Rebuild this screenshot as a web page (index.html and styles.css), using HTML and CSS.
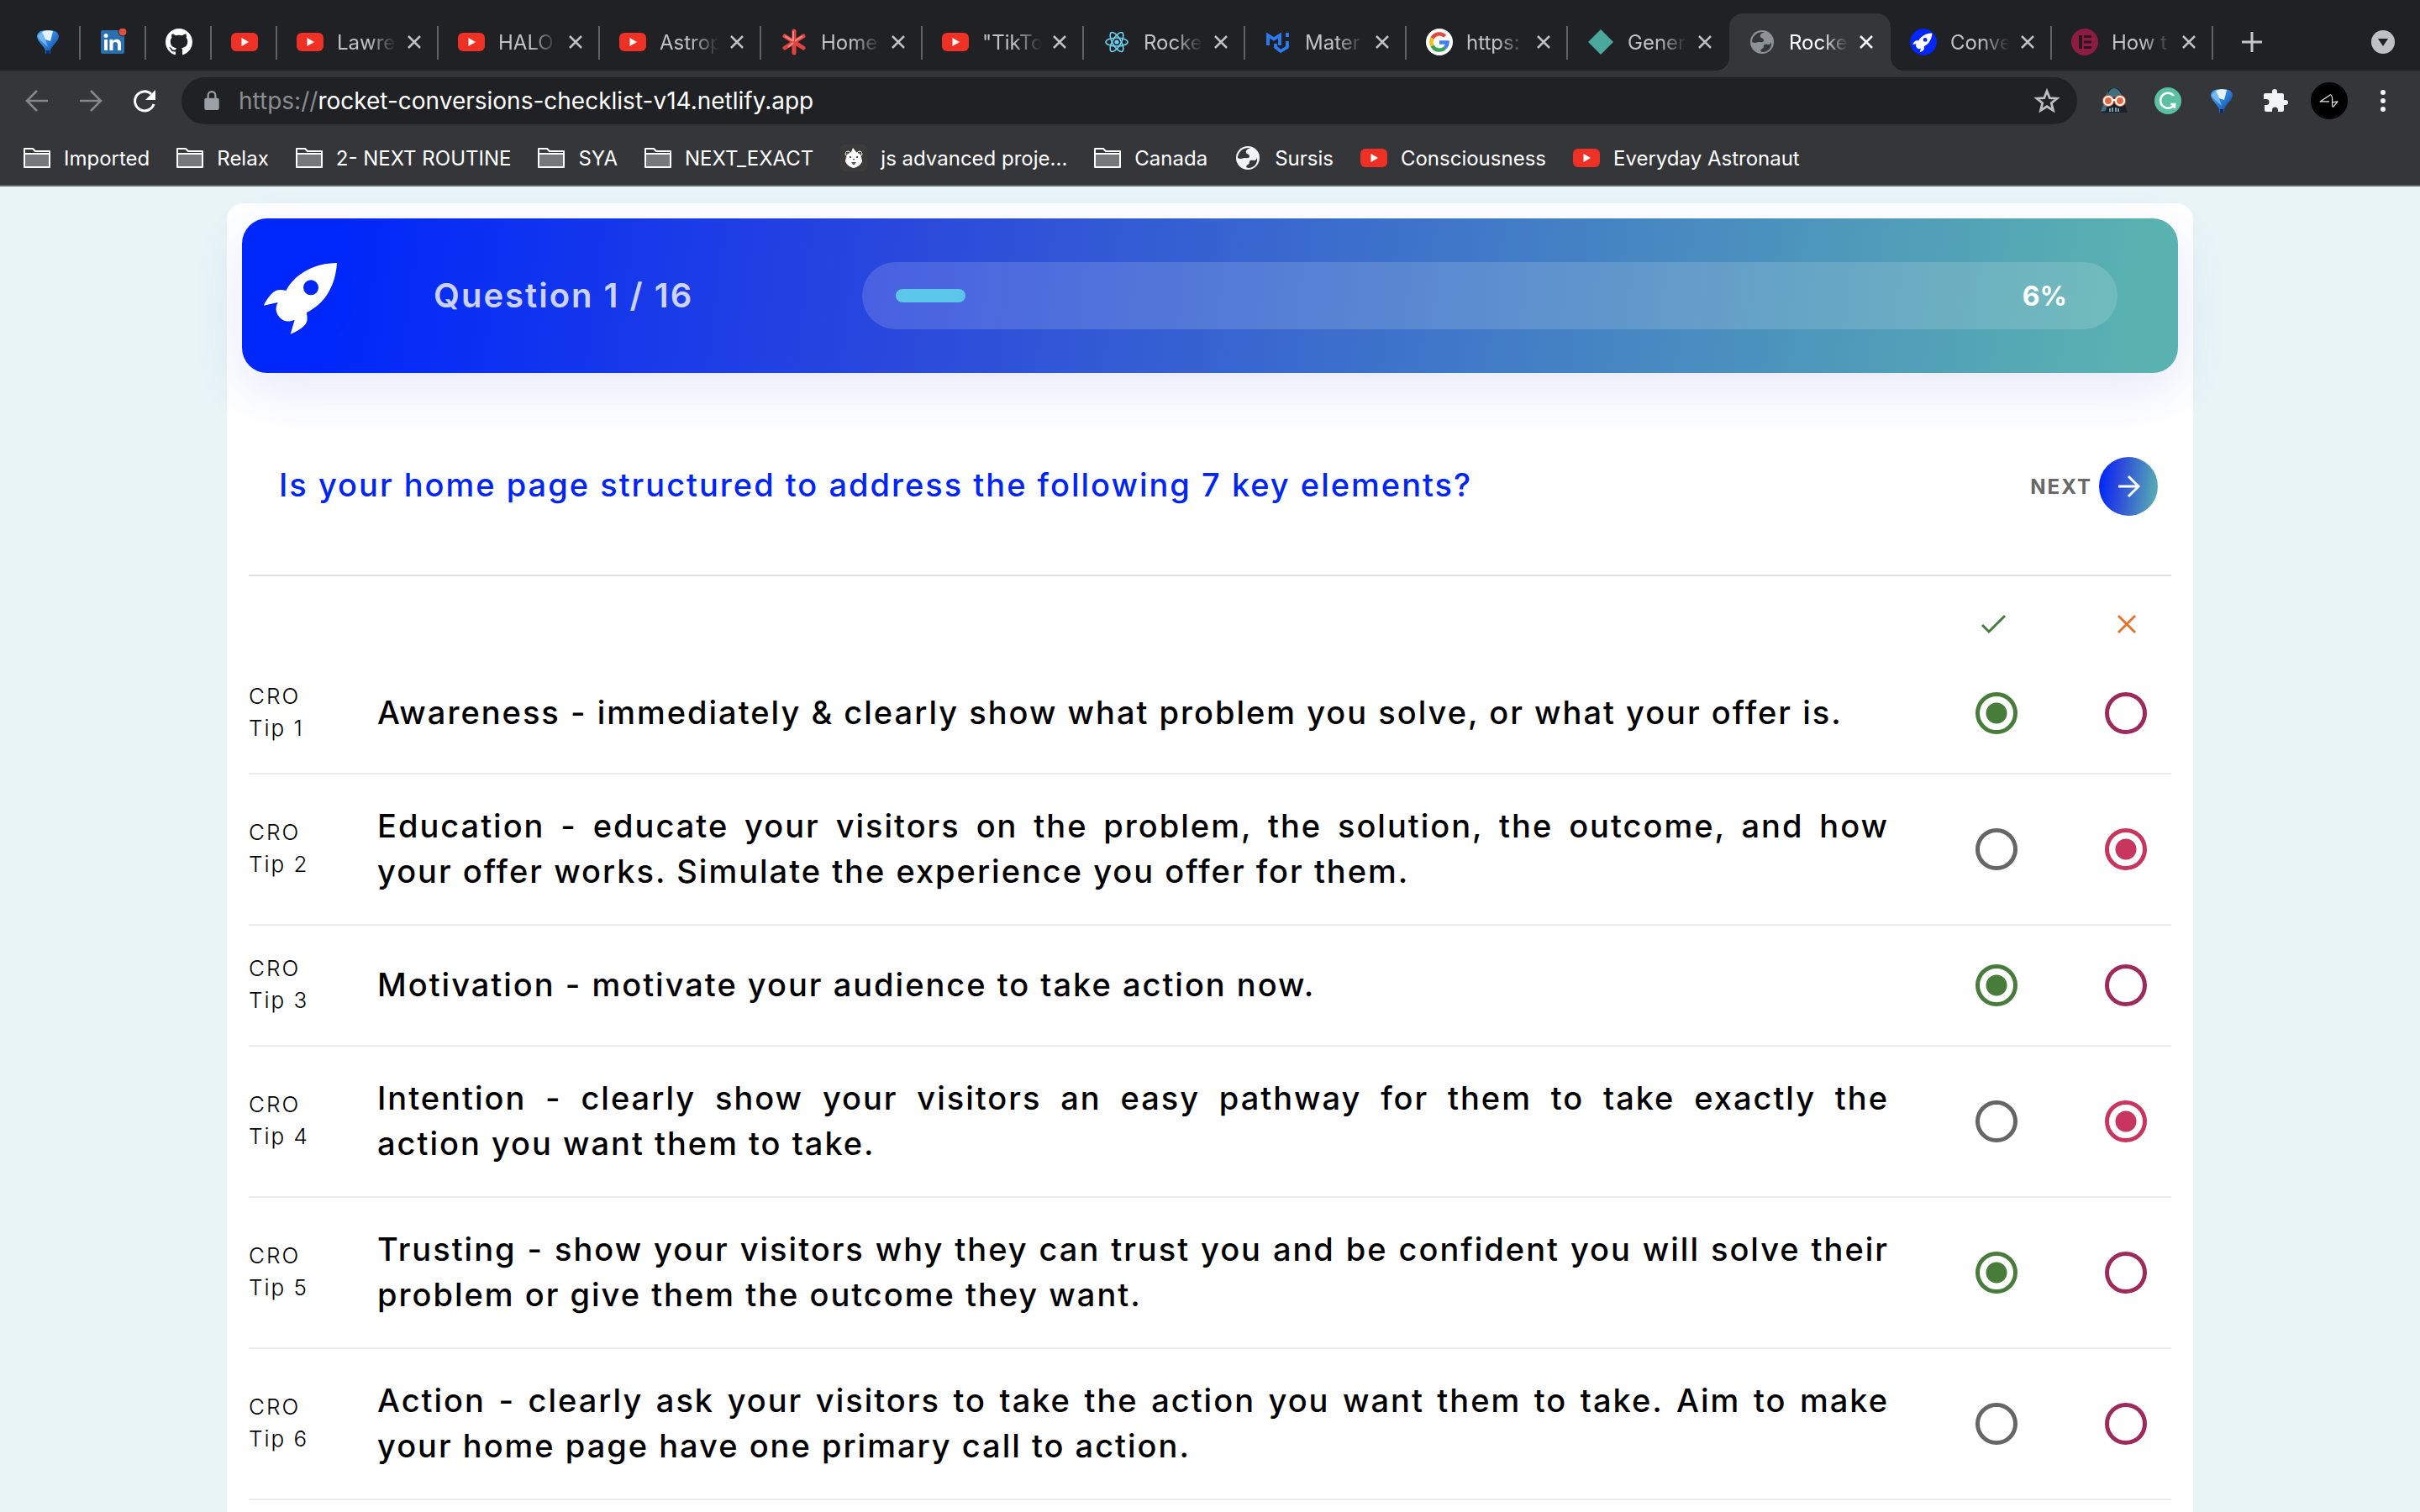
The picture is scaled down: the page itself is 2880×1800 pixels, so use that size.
FILE: index.html
```html
<!DOCTYPE html>
<html lang="en">
<head>
<meta charset="utf-8">
<title>Rocket Conversions Checklist</title>
<link rel="stylesheet" href="styles.css">
</head>
<body>
<svg class="defs" aria-hidden="true">
  <defs>
    <linearGradient id="balloonFill" x1="0" y1="0" x2="1" y2="1"><stop offset="0" stop-color="#4fa6ee"/><stop offset="0.45" stop-color="#2f86e0"/><stop offset="1" stop-color="#0a3f94"/></linearGradient>
  </defs>
  <symbol id="balloon" viewBox="0 0 32 32"><path fill="url(#balloonFill)" d="M3 9C4 3 9 2 16 2s12 1 13 7c0 6-8 11-10 17v4h-6v-4C11 20 3 15 3 9z"/><path fill="#e6f3ff" d="M9 4c4-2 9-2 13-1l-3 12-6-2z"/><path fill="#9fd0fa" d="M4 9l5-5 4 9 3 9C11 17 5 13 4 9z" opacity=".6"/><path fill="#0b2c5e" d="M14 26h4v4h-4z"/></symbol>
  <symbol id="youtube" viewBox="0 0 32 32"><rect y="5" width="32" height="22" rx="6" fill="#ee3124"/><path fill="#fff" d="M12.500 11v10l8.500-5z"/></symbol>
  <symbol id="linkedin" viewBox="0 0 32 32"><rect x="1" y="2" width="28" height="28" rx="2" fill="#2a70b0"/><path fill="#fff" d="M5 13h4v13H5zM11.500 13h4v2c2-3.500 9.500-3.500 9.500 3V26h-4v-7c0-4-5.500-4-5.500 0v7h-4z"/><circle cx="7" cy="8.500" r="2.500" fill="#fff"/><circle cx="27" cy="4" r="5" fill="#e0523f" stroke="#202124"/></symbol>
  <symbol id="github" viewBox="0 0 16 16"><path fill="#fff" d="M8 0C3.580 0 0 3.580 0 8c0 3.540 2.290 6.530 5.470 7.590.4.070.55-.17.55-.38 0-.19-.01-.82-.01-1.490-2.010.37-2.530-.49-2.690-.94-.09-.23-.48-.94-.82-1.130-.28-.15-.68-.52-.01-.53.63-.01 1.080.58 1.230.82.72 1.210 1.870.87 2.330.66.07-.52.28-.87.51-1.070-1.780-.2-3.640-.89-3.640-3.950 0-.87.31-1.590.82-2.150-.08-.2-.36-1.020.08-2.120 0 0 .67-.21 2.200.82.64-.18 1.320-.27 2-.27s1.360.09 2 .27c1.530-1.040 2.200-.82 2.200-.82.44 1.100.16 1.920.08 2.120.51.56.82 1.270.82 2.150 0 3.070-1.870 3.750-3.650 3.950.29.25.54.73.54 1.480 0 1.070-.01 1.930-.01 2.200 0 .21.15.46.55.38A8.010 8.010 0 0 0 16 8c0-4.420-3.580-8-8-8z"/></symbol>
  <symbol id="asterisk" viewBox="0 0 32 32"><g stroke="#e2433d" stroke-width="5" stroke-linecap="round"><path d="M16 3v26M5 9l22 14M27 9L5 23"/></g><g stroke="#f58d86" stroke-width="2"><path d="M15 3v12M5 9l10 6M26 9l-9 6M9 22l6-5"/></g></symbol>
  <symbol id="react" viewBox="0 0 32 32"><g fill="none" stroke="#6ad1ef" stroke-width="1.600"><ellipse cx="16" cy="16" rx="13" ry="5"/><ellipse cx="16" cy="16" rx="13" ry="5" transform="rotate(60 16 16)"/><ellipse cx="16" cy="16" rx="13" ry="5" transform="rotate(120 16 16)"/></g><circle cx="16" cy="16" r="2.600" fill="#6ad1ef"/></symbol>
  <symbol id="mui" viewBox="0 0 32 32"><g fill="none" stroke="#2a7df4" stroke-width="3.800"><path d="M4 20V8l7 4.500L18 8v12M13 18v4l6 5 8-5v-7M27 5v5"/></g></symbol>
  <symbol id="google" viewBox="0 0 32 32"><circle cx="16" cy="16" r="16" fill="#fff"/><g fill="none" stroke-width="4.400"><path stroke="#e04a3c" d="M7.500 11.500A9.500 9.500 0 0 1 22.700 9.300"/><path stroke="#f5bb17" d="M7.500 20.500a9.500 9.500 0 0 1 0-9"/><path stroke="#36a352" d="M22.500 23a9.500 9.500 0 0 1-15-2.500"/><path stroke="#4080ee" d="M16 16.500h9.500a9.500 9.500 0 0 1-3 6.500"/></g></symbol>
  <symbol id="diamond" viewBox="0 0 32 32"><path fill="#4aa99c" d="M16 1l15 15-15 15L1 16z"/></symbol>
  <symbol id="globe" viewBox="0 0 32 32"><circle cx="16" cy="16" r="14" fill="currentColor"/><path d="M19 4c-3 1-6 3-5 6 1 2 4 1 4 4s-4 2-6 2-4 2-8 0c0-7 6-13 15-12zM17 28c-4 0-3-3-1-4 3-1 1-4 3-5 3-1 6 2 8-3 1 7-4 12-10 12z"/></symbol>
  <symbol id="rocket" viewBox="6 6 360 360"><circle cx="186" cy="186" r="180" fill="#0027fa"/><path fill="#fff" fill-rule="evenodd" d="M303 69C225 70 155 105 121 168C100 162 82 164 68 181C54 198 47 208 42 221L92 210C80 232 86 252 102 267C116 280 132 280 152 272L137 323C160 314 181 302 192 286C200 272 196 260 195 246C260 215 298 150 303 69zM210 130a27 27 0 1 1 0 54a27 27 0 1 1 0-54z"/></symbol>
  <symbol id="elementor" viewBox="0 0 32 32"><circle cx="16" cy="16" r="16" fill="#8e1c40"/><path fill="#2b1620" d="M9 8h4v16H9zM15 8h9v3h-9zM15 14.500h9v3h-9zM15 21h9v3h-9z"/></symbol>
  <symbol id="close" viewBox="0 0 18 18"><path fill="none" stroke="currentColor" stroke-width="2.500" d="M2 2l14 14M16 2L2 16"/></symbol>
  <symbol id="folder" viewBox="0 0 32 26"><path fill="#77787b" d="M2 9h28v14H2z"/><path fill="none" stroke="#fff" stroke-width="2" stroke-linejoin="round" d="M1 24V2h10l3 3h17v19zM1 8h30"/></symbol>
  <symbol id="bear" viewBox="0 0 32 32"><rect width="32" height="32" rx="5" fill="#3c3b3a"/><circle cx="9" cy="11" r="3" fill="#555" stroke="#fff"/><circle cx="23" cy="11" r="3" fill="#555" stroke="#fff"/><path fill="#fff" d="M15 4l4 5 5 3 2 7c0 4-5 8-10 9-5-1-10-5-10-9l2-7 5-3z"/><path fill="#555" d="M11 14h2v2h-2zM19 14h2v2h-2zM14.500 17h3l-1.500 2zM13 21h6l-2 3h-2z"/></symbol>
</svg>

<header class="browser">
  <nav class="tabs" aria-label="Open tabs">
    <a class="pin" href="#" aria-label="Balloon"><svg class="fav"><use href="#balloon"/></svg></a>
    <a class="pin" href="#" aria-label="LinkedIn"><svg class="fav"><use href="#linkedin"/></svg></a>
    <a class="pin" href="#" aria-label="GitHub"><svg class="fav"><use href="#github"/></svg></a>
    <a class="pin" href="#" aria-label="YouTube"><svg class="fav"><use href="#youtube"/></svg></a>
    <div class="tab"><svg class="fav"><use href="#youtube"/></svg><a class="tab-title" href="#">Lawre</a><button class="tab-close" aria-label="Close tab"><svg><use href="#close"/></svg></button></div>
    <div class="tab"><svg class="fav"><use href="#youtube"/></svg><a class="tab-title" href="#">HALO</a><button class="tab-close" aria-label="Close tab"><svg><use href="#close"/></svg></button></div>
    <div class="tab"><svg class="fav"><use href="#youtube"/></svg><a class="tab-title" href="#">Astrop</a><button class="tab-close" aria-label="Close tab"><svg><use href="#close"/></svg></button></div>
    <div class="tab"><svg class="fav"><use href="#asterisk"/></svg><a class="tab-title" href="#">Home</a><button class="tab-close" aria-label="Close tab"><svg><use href="#close"/></svg></button></div>
    <div class="tab"><svg class="fav"><use href="#youtube"/></svg><a class="tab-title" href="#">"TikTo</a><button class="tab-close" aria-label="Close tab"><svg><use href="#close"/></svg></button></div>
    <div class="tab"><svg class="fav"><use href="#react"/></svg><a class="tab-title" href="#">Rocke</a><button class="tab-close" aria-label="Close tab"><svg><use href="#close"/></svg></button></div>
    <div class="tab"><svg class="fav"><use href="#mui"/></svg><a class="tab-title" href="#">Mater</a><button class="tab-close" aria-label="Close tab"><svg><use href="#close"/></svg></button></div>
    <div class="tab"><svg class="fav"><use href="#google"/></svg><a class="tab-title" href="#">https:</a><button class="tab-close" aria-label="Close tab"><svg><use href="#close"/></svg></button></div>
    <div class="tab tab-before"><svg class="fav"><use href="#diamond"/></svg><a class="tab-title" href="#">Gener</a><button class="tab-close" aria-label="Close tab"><svg><use href="#close"/></svg></button></div>
    <div class="tab tab-active"><svg class="fav globe-grey"><use href="#globe"/></svg><a class="tab-title" href="#" aria-current="page">Rocke</a><button class="tab-close" aria-label="Close tab"><svg><use href="#close"/></svg></button></div>
    <div class="tab"><svg class="fav fav-round"><use href="#rocket"/></svg><a class="tab-title" href="#">Conve</a><button class="tab-close" aria-label="Close tab"><svg><use href="#close"/></svg></button></div>
    <div class="tab"><svg class="fav"><use href="#elementor"/></svg><a class="tab-title" href="#">How t</a><button class="tab-close" aria-label="Close tab"><svg><use href="#close"/></svg></button></div>
    <button class="icon-btn new-tab" aria-label="New tab"><svg viewBox="0 0 40 40"><path stroke="#c4c7cb" stroke-width="3" d="M20 8v24M8 20h24"/></svg></button>
    <button class="icon-btn tab-search" aria-label="Search tabs"><svg viewBox="0 0 40 40"><circle cx="20" cy="20" r="14" fill="#bdc1c6"/><path fill="#202124" d="M14 16h12l-6 9z"/></svg></button>
  </nav>

  <div class="toolbar">
    <button class="icon-btn" aria-label="Back"><svg viewBox="0 0 40 40" fill="none" stroke="#85878a" stroke-width="2.600"><path d="M33 20H9M20 8L8 20l12 12"/></svg></button>
    <button class="icon-btn" aria-label="Forward"><svg viewBox="0 0 40 40" fill="none" stroke="#85878a" stroke-width="2.600"><path d="M7 20h24M20 8l12 12-12 12"/></svg></button>
    <button class="icon-btn" aria-label="Reload"><svg viewBox="0 0 40 40"><path fill="none" stroke="#fff" stroke-width="3" d="M31 24a11.500 11.500 0 1 1-3-12"/><path fill="#fff" d="M33 7v12H21z"/></svg></button>
    <div class="address">
      <svg class="lock" viewBox="0 0 18 22"><rect x="1" y="8" width="16" height="13" rx="2" fill="#9aa0a6"/><path fill="none" stroke="#9aa0a6" stroke-width="2" d="M5 9V5a4 4 0 0 1 8 0v4"/></svg>
      <label class="scheme" for="url">https://</label>
      <input class="url" id="url" type="text" value="rocket-conversions-checklist-v14.netlify.app">
      <button class="icon-btn" aria-label="Bookmark this page"><svg viewBox="0 0 40 40"><path fill="none" stroke="#bdbfc2" stroke-width="2.800" d="M20 8.500l3.300 8.200 8.700.5-6.700 5.600 2.200 8.600L20 26.700l-7.500 4.700 2.200-8.600L8 17.200l8.700-.5z"/></svg></button>
    </div>
    <button class="icon-btn" aria-label="Dark reader"><svg viewBox="0 0 40 40"><path fill="#16222b" d="M20 5c-8 0-10 7-11 15L4 34h32l-5-14C30 12 28 5 20 5z"/><path fill="#3f6f83" d="M13 14c0-6 4-9 7-9s9 4 10 12l-5-2-5 1-7 1zM13 8c-3 4-4 8-4 12L4 33l6-1 2-8z"/><g fill="#e2653f"><circle cx="13" cy="20" r="7"/><circle cx="27" cy="20" r="7"/></g><g fill="#e2653f" stroke="#fff" stroke-width="2.200"><circle cx="13" cy="20" r="5"/><circle cx="27" cy="20" r="5"/><path d="M18 19h4"/></g><path stroke="#9fc3d6" stroke-width="1.500" d="M15 29v4M18 28v5M22 28v5M25 29v4"/></svg></button>
    <button class="icon-btn" aria-label="Grammarly"><svg viewBox="0 0 40 40"><circle cx="20" cy="20" r="16" fill="#5bc0a0"/><path fill="none" stroke="#fff" stroke-width="2.600" d="M27 14a9 9 0 1 0 1 10h-5M28 29v-5"/></svg></button>
    <button class="icon-btn" aria-label="Balloon"><svg viewBox="0 0 32 32" class="fav"><use href="#balloon"/></svg></button>
    <button class="icon-btn" aria-label="Extensions"><svg viewBox="0 0 40 40"><path fill="#f1f3f4" d="M8 11h8v-2a3 3 0 0 1 6 0v2h6q2 0 2 2v6h2a3 3 0 0 1 0 6h-2v6q0 2-2 2h-5v-2a3 3 0 0 0-7 0v2h-7q-2 0-2-2v-6h2a3 3 0 0 0 0-7H6v-5q0-2 2-2z"/></svg></button>
    <button class="icon-btn avatar" aria-label="Profile"><svg viewBox="0 0 44 44"><path fill="none" stroke="#e8e8e8" stroke-width="1.300" stroke-linejoin="round" d="M26 24l7-1-6 7q-1 0-1-2V19q-1-7-4-4L10 23h12"/></svg></button>
    <button class="icon-btn" aria-label="Menu"><svg viewBox="0 0 40 40" fill="#f1f3f4"><circle cx="20" cy="10" r="3"/><circle cx="20" cy="20" r="3"/><circle cx="20" cy="30" r="3"/></svg></button>
  </div>

  <nav class="bookmarks" aria-label="Bookmarks">
    <a href="#"><svg class="folder"><use href="#folder"/></svg>Imported</a>
    <a href="#"><svg class="folder"><use href="#folder"/></svg>Relax</a>
    <a href="#"><svg class="folder"><use href="#folder"/></svg>2- NEXT ROUTINE</a>
    <a href="#"><svg class="folder"><use href="#folder"/></svg>SYA</a>
    <a href="#"><svg class="folder"><use href="#folder"/></svg>NEXT_EXACT</a>
    <a href="#"><svg class="fav"><use href="#bear"/></svg>js advanced proje...</a>
    <a href="#"><svg class="folder"><use href="#folder"/></svg>Canada</a>
    <a href="#"><svg class="fav globe-white"><use href="#globe"/></svg>Sursis</a>
    <a href="#"><svg class="fav"><use href="#youtube"/></svg>Consciousness</a>
    <a href="#"><svg class="fav"><use href="#youtube"/></svg>Everyday Astronaut</a>
  </nav>
</header>

<main class="page">
  <section class="card">
    <header class="banner">
      <svg class="logo" role="img" aria-label="Rocket Conversions"><use href="#rocket"/></svg>
      <h1 class="counter">Question 1 / 16</h1>
      <div class="progress">
        <div class="progress-bar"><div class="progress-fill" style="width: 6.25%"></div></div>
        <span class="progress-value">6%</span>
      </div>
    </header>

    <div class="question">
      <h2 class="question-text">Is your home page structured to address the following 7 key elements?</h2>
      <button class="next">NEXT<span class="next-disc"><svg viewBox="0 0 40 40"><path fill="none" stroke="#fff" stroke-width="3" d="M8 20h23M20 8l12 12-12 12"/></svg></span></button>
    </div>

    <table class="tips">
      <colgroup><col class="col-label"><col><col class="col-yes"><col class="col-no"></colgroup>
      <thead>
        <tr>
          <td></td><td></td>
          <th scope="col" aria-label="Yes"><svg class="mark" viewBox="0 0 40 40"><path fill="none" stroke="#457b3b" stroke-width="3" d="M3 21l8 8L30 10"/></svg></th>
          <th scope="col" aria-label="No"><svg class="mark" viewBox="0 0 40 40"><path fill="none" stroke="#e57330" stroke-width="3" d="M11 10l20 20M31 10L11 30"/></svg></th>
        </tr>
      </thead>
      <tbody>
        <tr>
          <th scope="row">CRO<br>Tip 1</th>
          <td class="tip">Awareness - immediately &amp; clearly show what problem you solve, or what your offer is.</td>
          <td class="choice"><input class="yes" type="radio" name="tip1" aria-label="Tip 1 yes" checked></td>
          <td class="choice"><input class="no" type="radio" name="tip1" aria-label="Tip 1 no"></td>
        </tr>
        <tr>
          <th scope="row">CRO<br>Tip 2</th>
          <td class="tip">Education - educate your visitors on the problem, the solution, the outcome, and how your offer works. Simulate the experience you offer for them.</td>
          <td class="choice"><input class="yes" type="radio" name="tip2" aria-label="Tip 2 yes"></td>
          <td class="choice"><input class="no" type="radio" name="tip2" aria-label="Tip 2 no" checked></td>
        </tr>
        <tr>
          <th scope="row">CRO<br>Tip 3</th>
          <td class="tip">Motivation - motivate your audience to take action now.</td>
          <td class="choice"><input class="yes" type="radio" name="tip3" aria-label="Tip 3 yes" checked></td>
          <td class="choice"><input class="no" type="radio" name="tip3" aria-label="Tip 3 no"></td>
        </tr>
        <tr>
          <th scope="row">CRO<br>Tip 4</th>
          <td class="tip">Intention - clearly show your visitors an easy pathway for them to take exactly the action&nbsp;you want them to take.</td>
          <td class="choice"><input class="yes" type="radio" name="tip4" aria-label="Tip 4 yes"></td>
          <td class="choice"><input class="no" type="radio" name="tip4" aria-label="Tip 4 no" checked></td>
        </tr>
        <tr>
          <th scope="row">CRO<br>Tip 5</th>
          <td class="tip">Trusting - show your visitors why they can trust you and be confident you will solve their problem or give them the outcome they want.</td>
          <td class="choice"><input class="yes" type="radio" name="tip5" aria-label="Tip 5 yes" checked></td>
          <td class="choice"><input class="no" type="radio" name="tip5" aria-label="Tip 5 no"></td>
        </tr>
        <tr>
          <th scope="row">CRO<br>Tip 6</th>
          <td class="tip">Action - clearly ask your visitors to take the action you want them to take. Aim to make your home page have one primary call to action.</td>
          <td class="choice"><input class="yes" type="radio" name="tip6" aria-label="Tip 6 yes"></td>
          <td class="choice"><input class="no" type="radio" name="tip6" aria-label="Tip 6 no"></td>
        </tr>
      </tbody>
    </table>
  </section>
</main>
</body>
</html>
```

FILE: styles.css
```css
* {
  box-sizing: border-box;
}

body {
  margin: 0;
  height: 100vh;
  display: flex;
  flex-direction: column;
  overflow: hidden;
  font-family: Inter, "Liberation Sans", sans-serif;
  background: #e8f4f6;
}

a {
  color: inherit;
  text-decoration: none;
}

button {
  display: flex;
  align-items: center;
  justify-content: center;
  padding: 0;
  border: 0;
  background: none;
  font: inherit;
  letter-spacing: inherit;
  color: inherit;
}

.defs {
  position: absolute;
  width: 0;
  height: 0;
}

.fav {
  flex: none;
  width: 32px;
  height: 32px;
}

.fav-round {
  border-radius: 50%;
}

.icon-btn {
  flex: none;
  width: 40px;
  height: 40px;
}

.icon-btn svg:not(.fav) {
  width: 100%;
  height: 100%;
}

/* Browser frame */
.browser {
  flex: none;
  background: #35363a;
  border-bottom: 2px solid #616266;
  color: #fff;
}

.tabs {
  display: flex;
  height: 84px;
  padding: 16px 24px 0 18px;
  background: #202124;
  color: #c0c2c5;
  font-size: 24px;
}

.pin,
.tab {
  flex: none;
  display: flex;
  align-items: center;
  background: linear-gradient(#5f6165, #5f6165) right 0 top 15px / 2px 40px no-repeat;
}

.pin {
  width: 78px;
  justify-content: center;
}

.tab {
  position: relative;
  width: 192px;
  padding: 0 20px 0 23px;
}

.tab-before {
  background: none;
}

.tab-active {
  background: #35363a;
  border-radius: 16px 16px 0 0;
  color: #fff;
}

.tab-active::before,
.tab-active::after {
  content: "";
  position: absolute;
  bottom: 0;
  width: 16px;
  height: 16px;
}

.tab-active::before {
  right: 100%;
  background: radial-gradient(circle at 0 0, transparent 16px, #35363a 16px);
}

.tab-active::after {
  left: 100%;
  background: radial-gradient(circle at 100% 0, transparent 16px, #35363a 16px);
}

.tab-title {
  flex: 1;
  min-width: 0;
  margin: 0 8px 0 16px;
  overflow: hidden;
  white-space: nowrap;
  -webkit-mask-image: linear-gradient(90deg, #000 50%, transparent 94%);
  mask-image: linear-gradient(90deg, #000 50%, transparent 94%);
}

.tab-close svg {
  width: 18px;
  height: 18px;
}

.globe-grey {
  color: #8d9297;
  fill: #35363a;
}

.globe-white {
  color: #f1f3f4;
  fill: #35363a;
}

.new-tab {
  align-self: center;
  margin: 0 auto 0 26px;
}

.tab-search {
  align-self: center;
}

.toolbar {
  display: flex;
  align-items: center;
  gap: 24px;
  padding: 8px 24px;
}

.address {
  flex: 1;
  display: flex;
  align-items: center;
  height: 56px;
  padding: 0 16px 0 26px;
  border-radius: 28px;
  background: #202124;
  font-size: 28px;
}

.lock {
  flex: none;
  width: 20px;
  height: 24px;
}

.scheme {
  margin-left: 22px;
  color: #8b8d91;
}

.url {
  flex: 1;
  padding: 0;
  border: 0;
  outline: 0;
  background: none;
  font: inherit;
  color: #fff;
}

.avatar {
  border-radius: 50%;
  background: #000;
  outline: 2px solid #000;
}

.bookmarks {
  display: flex;
  gap: 32px;
  height: 64px;
  padding: 0 28px;
  font-size: 24px;
}

.bookmarks a {
  display: flex;
  align-items: center;
  gap: 16px;
  white-space: nowrap;
}

.folder {
  width: 32px;
  height: 26px;
}

/* Checklist page */
.page {
  flex: 1;
  min-height: 0;
  overflow: hidden;
}

.card {
  width: 81.25%;
  margin: 20px auto 0;
  padding: 18px 18px 80px;
  border-radius: 20px;
  background: #fff;
  letter-spacing: 2px;
}

.banner {
  display: grid;
  grid-template-columns: 120px 416px 1fr;
  column-gap: 94px;
  align-items: center;
  height: 184px;
  padding: 0 72px 0 14px;
  border-radius: 30px;
  background: linear-gradient(97deg, #0027fa 5%, #2a48dc 34%, #5ab3b0 98%);
  box-shadow: 0 20px 60px rgba(40, 70, 210, 0.12);
}

.logo {
  width: 120px;
  height: 120px;
}

.counter {
  margin: 0;
  font-size: 40px;
  font-weight: 600;
  line-height: 48px;
  color: rgba(255, 255, 255, 0.8);
}

.progress {
  display: flex;
  align-items: center;
  gap: 16px;
  height: 80px;
  padding: 0 60px 0 40px;
  border-radius: 40px;
  background: rgba(255, 255, 255, 0.15);
}

.progress-bar {
  flex: 1;
}

.progress-fill {
  height: 16px;
  border-radius: 8px;
  background: #5bc5ea;
}

.progress-value {
  font-size: 32px;
  font-weight: 700;
  letter-spacing: 0;
  color: #fff;
}

.question {
  display: flex;
  align-items: center;
  justify-content: space-between;
  margin: 0 8px;
  padding: 100px 16px 70px 36px;
  border-bottom: 2px solid #e2e2e2;
}

.question-text {
  margin: 0;
  padding-bottom: 4px;
  font-size: 38px;
  font-weight: 500;
  line-height: 54px;
  color: #0025f6;
}

.next {
  gap: 8px;
  font-size: 24px;
  font-weight: 700;
  color: #686868;
}

.next-disc {
  display: flex;
  align-items: center;
  justify-content: center;
  width: 70px;
  height: 70px;
  border-radius: 50%;
  background: linear-gradient(97deg, #0027fa 5%, #2a48dc 34%, #5ab3b0 98%);
}

.next-disc svg {
  width: 40px;
  height: 40px;
}

.tips {
  width: calc(100% - 16px);
  margin: 0 8px;
  border-spacing: 0;
  table-layout: fixed;
}

.col-label {
  width: 153px;
}

.col-yes {
  width: 200px;
}

.col-no {
  width: 108px;
}

.tips thead th {
  height: 92px;
  padding: 22px 0 0;
}

.mark {
  display: block;
  width: 40px;
  height: 40px;
  margin: 0 auto;
}

.tips tbody th,
.tips tbody td {
  border-bottom: 2px solid #ededed;
}

.tips tbody th {
  padding: 32px 0 34px;
  text-align: left;
  font-size: 26px;
  font-weight: 300;
  line-height: 38px;
}

.tips .tip {
  padding: 34px 28px 36px 0;
  text-align: justify;
  font-size: 38px;
  font-weight: 500;
  line-height: 54px;
}

.tips .choice {
  padding: 0;
  text-align: center;
}

.choice input {
  appearance: none;
  display: block;
  width: 50px;
  height: 50px;
  margin: 0 auto;
  border: 5px solid #666;
  border-radius: 50%;
  color: #477c3b;
}

.choice .no {
  border-color: #9e2a5b;
  color: #c8365f;
}

.choice input:checked {
  border-color: currentColor;
  background: radial-gradient(circle, currentColor 12px, transparent 13px);
}
```
